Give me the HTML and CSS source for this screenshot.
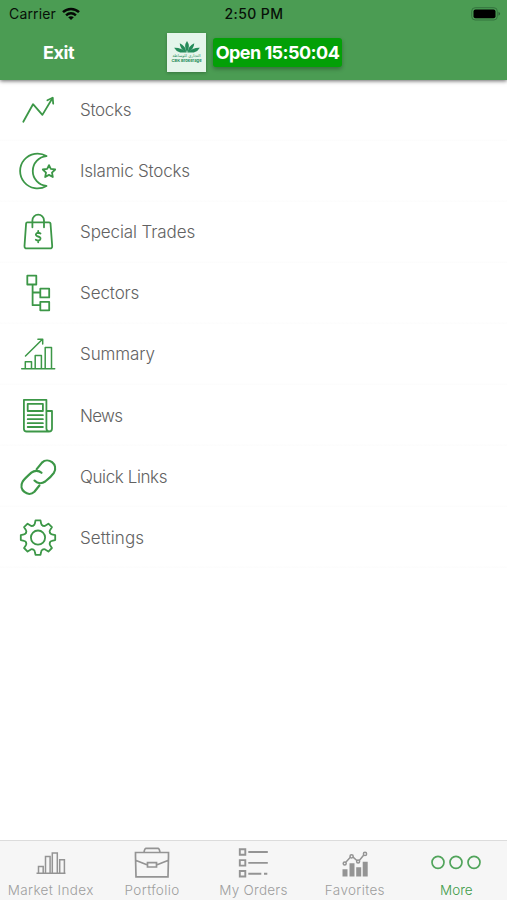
FILE: index.html
```html
<!DOCTYPE html>
<html lang="en">
<head>
<meta charset="utf-8">
<meta name="viewport" content="width=device-width, initial-scale=1">
<title>More</title>
<link rel="stylesheet" href="styles.css">
</head>
<body>
<div class="app">
  <header class="header">
    <div class="status">
      <div class="carrier"><span>Carrier</span>
        <svg class="wifi" viewBox="0 0 18 13"><g fill="none" stroke="#050805" stroke-width="2.5"><path d="M1 5.1C5.5.8 12.500.8 17 5.100"/><path d="M4.100 8.300c2.800-2.600 7-2.600 9.800 0"/></g><path d="M6.200 10.200c1.600-1.400 4-1.400 5.600 0L9 13z" fill="#050805"/></svg>
      </div>
      <span class="clock">2:50 PM</span>
      <svg class="battery" viewBox="0 0 30 14"><rect x=".7" y=".7" width="25.600" height="12.300" rx="3.500" fill="none" stroke="#34743f"/><rect x="2.500" y="2.500" width="22" height="8.700" rx="2" fill="#000"/><path d="M27.500 4.800q3.200 2 0 4z" fill="#2c6137"/></svg>
    </div>
    <div class="toolbar">
      <span class="exit">Exit</span>
      <div class="logo">
        <svg viewBox="0 0 32 14"><g fill="#258b5a"><path d="M16 0q4.500 6 0 13.500Q11.500 6 16 0z"/><path d="M7.500 2.500Q14 5 15.500 13.500 8 10 7.500 2.500zM24.500 2.500Q18 5 16.500 13.500 24 10 24.500 2.500z"/><path d="M1 8q8-.5 14.500 5.500H8Q3 12 1 8zM31 8q-8-.5-14.500 5.500H24q5-1.500 7-5.500z"/></g></svg>
        <span class="logo-ar" lang="ar" dir="rtl">التجاري للوساطة</span>
        <span class="logo-en">CBK Brokerage</span>
      </div>
      <span class="market">Open 15:50:04</span>
    </div>
  </header>

  <main class="menu">
    <div class="row"><svg class="icon" viewBox="0 0 40 40"><path d="M5.300 31.700 15 14.200l9.400 10.700L34.400 8.300"/><path d="m29.400 10.300 5.300-2.600.5 6"/></svg><span class="w-stocks">Stocks</span></div>
    <div class="row"><svg class="icon" viewBox="0 0 40 40"><path d="M28.500 5.100A17.400 17.400 0 1 0 28.500 34.900 14.950 14.950 0 0 1 28.500 5.100z"/><path d="m31 14.100 1.800 3.800 4.400.6-3.200 3.100.8 4.400-3.800-2.100-3.800 2.100.8-4.400-3.200-3.100 4.400-.6z"/></svg><span class="w-islamic">Islamic Stocks</span></div>
    <div class="row"><svg class="icon" viewBox="0 0 40 40"><path d="M9.300 10.300h21.800q1.200 0 1.400 1.200L34.200 34q.1 2.400-2.300 2.400H8.800Q6.400 36.400 6.500 34l1.600-22.500q.1-1.200 1.200-1.200z"/><path d="M14.400 15.300V8.500a5.800 5.800 0 0 1 11.600 0v6.800"/><path d="M22.500 21.600q-2.300-1.600-4-.2c-1.500 1.500-.2 2.700 1.600 3.100 2.400.5 3.200 2.100 1.700 3.500q-1.700 1.200-4-.3M20.200 19v2M20.200 28.600v1.700"/></svg><span class="w-special">Special Trades</span></div>
    <div class="row"><svg class="icon" viewBox="0 0 40 40"><path d="M9.300 2.700h9v8.800h-9zM22.300 15.700h8.900v8.700h-8.900zM22.300 28.800h8.900v8.500h-8.900zM14.600 11.500v20.700h7.700M14.600 19.500h7.700"/></svg><span class="w-sectors">Sectors</span></div>
    <div class="row"><svg class="icon thin" viewBox="0 0 40 40"><path d="M3.700 34.800h33M7.300 34.500v-6.700h6.200v6.700M17.200 34.500V21.400h6.200v13.100M27.200 34.500v-21h6.300v21M7.500 22 24.200 5.500M19.900 5.200h4.800v4.700"/></svg><span class="w-summary">Summary</span></div>
    <div class="row"><svg class="icon" viewBox="0 0 40 40"><path d="M5.900 3.800h22.500v28.900q.3 2.800 2.700 2.800H8.700q-2.800 0-2.800-2.800zM28.400 15H34v17.400q0 3.100-3.200 3.100M9.700 7.800h15.200V15H9.700zM9.700 19.200h15.200M9.700 23.200h15.200M9.700 27.200h15.200M9.700 31h15.200"/></svg><span class="w-news">News</span></div>
    <div class="row"><svg class="icon bold" viewBox="0 0 40 40"><path d="M18.700 12.100 24 5.600c6-5.900 16.800 1.500 11.900 10.200-2 2.900-5.600 6.300-8.700 8.700-3.700 2.500-8 1.900-10.700-.9"/><path d="M23.500 15.800c-2.700-2.600-7-2.700-10.100-.2-3.100 2.700-6.500 5.700-8.600 8.700-5.100 8.700 5.500 16.300 11.600 10.400l5-6.200"/></svg><span class="w-links">Quick Links</span></div>
    <div class="row"><svg class="icon" viewBox="0 0 40 40"><defs><path id="tooth" d="M-4.900-11.900Q-3.400-12.500-3.200-13.900L-2.500-17.200H2.500L3.200-13.900Q3.400-12.500 4.900-11.900"/></defs><g transform="translate(20 19.600)"><circle r="7.100"/><use href="#tooth"/><use href="#tooth" transform="rotate(45)"/><use href="#tooth" transform="rotate(90)"/><use href="#tooth" transform="rotate(135)"/><use href="#tooth" transform="rotate(180)"/><use href="#tooth" transform="rotate(225)"/><use href="#tooth" transform="rotate(270)"/><use href="#tooth" transform="rotate(315)"/></g></svg><span class="w-settings">Settings</span></div>
  </main>

  <nav class="tabs">
    <div class="tab"><svg viewBox="0 0 40 34"><path stroke-width="1.500" d="M5.500 28.300h29M7.500 28v-6.500h4.700V28M14.500 28V11.500h4.600V28M21.300 28V8h5v20M28.700 28V14.800h4.700V28"/></svg><span class="t-market">Market Index</span></div>
    <div class="tab"><svg viewBox="0 0 40 34"><path stroke-width="1.700" d="M3.500 7.500h33v4L36 31.800H4L3.500 11.500zM12 7.300q.6-4 2-4h12q1.400 0 2 4M3.500 15.200l12 4.800M36.500 15.200l-12 4.800M15.500 17.600h9v4.400h-9z"/></svg><span class="t-portfolio">Portfolio</span></div>
    <div class="tab"><svg viewBox="0 0 40 34"><path stroke-width="1.900" d="M6.800 4.200h5.500v5.500H6.800zM6.800 15.100h5.500v5.500H6.800zM6.800 26h5.500v5.500H6.800zM15.300 7h19.500M15.300 17.900h19.500M15.300 28.700h13M31 28.700h3.300"/></svg><span class="t-orders">My Orders</span></div>
    <div class="tab"><svg viewBox="0 0 40 34"><path fill="#949494" stroke="none" d="M7.500 24.200h5v7.300h-5zM14.500 18.300h5v13.200h-5zM21.200 22.200h5v9.300h-5zM27.700 16.700h5v14.800h-5z"/><path stroke-width="1.500" d="m10.800 17.300 4.800-5.200M17.800 11.900l4.300 3.800M24.300 15.500l4.500-5.500"/><g stroke-width="1.500"><circle cx="9.700" cy="18.400" r="1.500"/><circle cx="16.600" cy="11.300" r="1.600"/><circle cx="23.100" cy="16.500" r="1.500"/><circle cx="30" cy="8.900" r="1.600"/></g></svg><span class="t-favorites">Favorites</span></div>
    <div class="tab active"><svg class="dots" viewBox="0 0 54 34"><circle cx="9" cy="17.300" r="6"/><circle cx="27" cy="17.300" r="6"/><circle cx="45" cy="17.300" r="6"/></svg><span class="t-more">More</span></div>
  </nav>
</div>
</body>
</html>
```
FILE: styles.css
```css
* { box-sizing: border-box; }
body { margin: 0; background: #fff; font-family: Inter, "Liberation Sans", sans-serif; }
.app { height: 900px; display: flex; flex-direction: column; overflow: hidden; }
svg { display: block; flex: none; }

.header { height: 79.500px; background: #4b9c53; box-shadow: 0 1px 4px rgba(0,0,0,.6); z-index: 1; flex: none; }
.status { height: 27px; display: grid; grid-template-columns: 1fr auto 1fr; align-items: center; padding: 0 6px 0 9px; font-size: 14px; color: #071008; }
.carrier { display: flex; align-items: center; gap: 6px; letter-spacing: .15px; }
.wifi { width: 18px; height: 13px; }
.clock { font-weight: 500; letter-spacing: .4px; margin-right: 2px; }
.battery { width: 30px; height: 14px; justify-self: end; }
.toolbar { height: 50px; display: flex; align-items: center; color: #fff; font-size: 18px; font-weight: 700; white-space: nowrap; }
.exit { width: 124px; margin-left: 43px; letter-spacing: -.4px; }
.logo { width: 39px; height: 39px; background: #e5f5eb; box-shadow: 0 1px 3px rgba(0,0,0,.25); display: flex; flex-direction: column; align-items: center; padding-top: 8px; color: #258b5a; overflow: hidden; }
.logo svg { width: 28px; height: 12px; }
.logo-ar { font: 400 4px/5px "DejaVu Sans", sans-serif; }
.logo-en { font: 700 4.100px/5px Inter, sans-serif; }
.market { width: 129px; height: 29px; margin-left: 7px; border-radius: 3px; background: #03a007; box-shadow: 0 2px 4px rgba(0,0,0,.3); line-height: 29px; text-align: center; letter-spacing: -.55px; }

.menu { flex: 1; background: #fff; }
.row { height: 61.100px; display: flex; align-items: center; padding-left: 18px; gap: 22px; font-size: 17px; font-weight: 300; color: #626262; background: linear-gradient(#fff 96%, #fcfcfc); }
.icon { width: 40px; height: 40px; fill: none; stroke: #3c9747; stroke-width: 1.800; stroke-linejoin: round; stroke-linecap: round; }
.thin { stroke-width: 1.500; }
.bold { stroke-width: 2.200; }
.w-stocks { letter-spacing: -.3px; }
.w-islamic { letter-spacing: -.2px; }
.w-special, .w-sectors, .w-summary { letter-spacing: -.1px; }
.w-news { letter-spacing: -.7px; }
.w-links { letter-spacing: -.4px; }
.w-settings { letter-spacing: .1px; }

.tabs { height: 60px; flex: none; border-top: 1px solid #dcdcdc; background: #f6f6f6; display: grid; grid-template-columns: repeat(5, 1fr); }
.tab { display: flex; flex-direction: column; align-items: center; padding-top: 4px; font-size: 13.500px; line-height: 18px; font-weight: 300; color: #9e9e9e; white-space: nowrap; }
.tab svg { width: 40px; height: 34px; fill: none; stroke: #949494; margin-bottom: 2px; }
.tab .dots { width: 54px; stroke: #51a45b; stroke-width: 1.700; }
.t-market { letter-spacing: .4px; }
.t-portfolio, .t-favorites { letter-spacing: .35px; }
.t-orders { letter-spacing: .25px; }
.tab.active { color: #3f9c4b; }
```
